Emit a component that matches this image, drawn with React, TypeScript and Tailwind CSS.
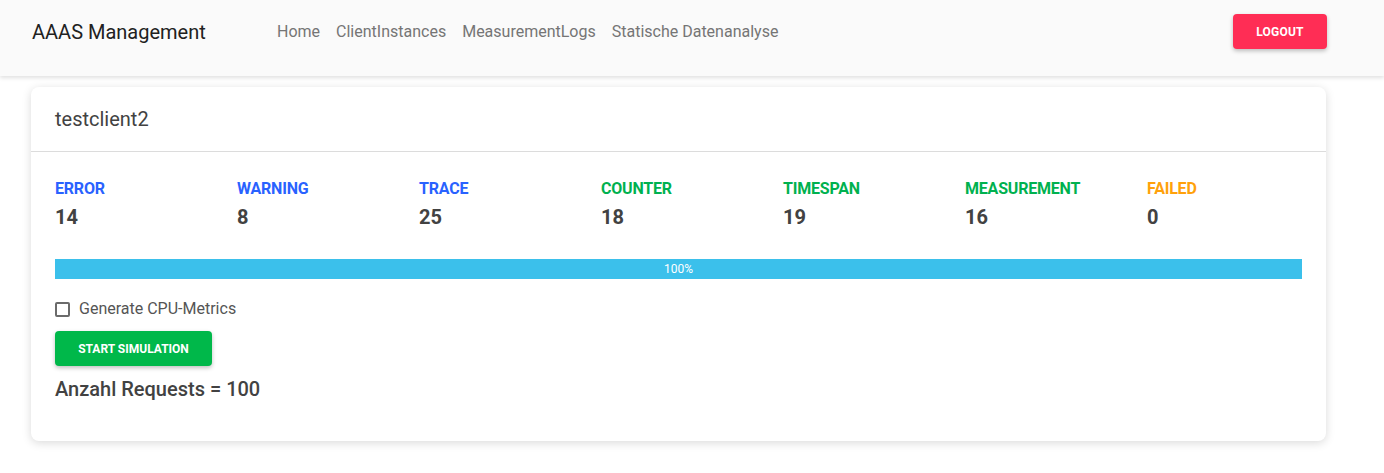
import React from "react";

const stats = [
  { label: "ERROR", value: "14", color: "text-[#2962ff]" },
  { label: "WARNING", value: "8", color: "text-[#2962ff]" },
  { label: "TRACE", value: "25", color: "text-[#2962ff]" },
  { label: "COUNTER", value: "18", color: "text-[#00b14f]" },
  { label: "TIMESPAN", value: "19", color: "text-[#00b14f]" },
  { label: "MEASUREMENT", value: "16", color: "text-[#00b14f]" },
  { label: "FAILED", value: "0", color: "text-[#ffa10a]" },
];

export default function App() {
  return (
    <div className="min-h-[473px] bg-white font-['Roboto',sans-serif]">
      <header className="h-[76px] bg-[#fafafa] shadow-[0_2px_4px_rgba(0,0,0,0.12)] flex items-start relative z-10">
        <div className="pl-[32px] pt-[19px] text-[20px] leading-[26px] text-[#212121] w-[277px]">
          AAAS Management
        </div>
        <nav className="flex gap-[16px] pt-[21px] text-[16px] leading-[22px] text-[#757575]">
          <span>Home</span>
          <span>ClientInstances</span>
          <span>MeasurementLogs</span>
          <span>Statische Datenanalyse</span>
        </nav>
        <div className="ml-auto pr-[57px] pt-[14px]">
          <button className="w-[94px] h-[35px] rounded-[4px] bg-[#ff2d55] text-white text-[12px] font-bold tracking-[0.2px] shadow-[0_2px_4px_rgba(0,0,0,0.25)]">
            LOGOUT
          </button>
        </div>
      </header>
      <main className="pt-[11px] pl-[31px] pr-[58px] pb-[32px]">
        <div className="rounded-[8px] bg-white shadow-[0_2px_10px_rgba(0,0,0,0.15)]">
          <div className="h-[65px] border-b border-[#dcdcdc] px-[24px] pt-[19px] text-[20px] leading-[26px] text-[#424242]">
            testclient2
          </div>
          <div className="px-[24px] pt-[27px] pb-[39px]">
            <div className="flex">
              {stats.map((s) => (
                <div key={s.label} className="w-[182px] shrink-0">
                  <div className={`text-[16px] leading-[20px] font-bold tracking-[-0.2px] ${s.color}`}>{s.label}</div>
                  <div className="mt-[6px] text-[20px] leading-[24px] font-bold text-[#424242]">{s.value}</div>
                </div>
              ))}
            </div>
            <div className="mt-[30px] h-[20px] bg-[#3bc0eb] flex items-center justify-center text-white text-[12px] leading-[14px]">
              100%
            </div>
            <label className="mt-[20px] flex items-center gap-[9px] text-[16px] leading-[20px] text-[#555]">
              <span className="w-[15px] h-[15px] border-2 border-[#6b6b6b] rounded-[2px] inline-block" />
              Generate CPU-Metrics
            </label>
            <button className="mt-[12px] w-[157px] h-[35px] rounded-[4px] bg-[#00b84a] text-white text-[12px] font-bold shadow-[0_2px_4px_rgba(0,0,0,0.25)]">
              START SIMULATION
            </button>
            <div className="mt-[10px] text-[20px] leading-[26px] font-medium text-[#424242]">
              Anzahl Requests = 100
            </div>
          </div>
        </div>
      </main>
    </div>
  );
}
